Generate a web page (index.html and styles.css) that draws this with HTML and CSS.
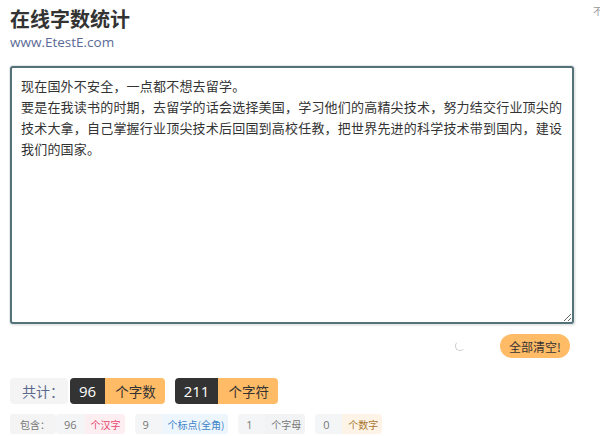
FILE: index.html
```html
<!DOCTYPE html>
<html lang="zh-CN">
  <head>
    <meta charset="UTF-8" />
    <meta name="viewport" content="width=device-width, initial-scale=1.0" />
    <title>在线字数统计</title>
    <link rel="stylesheet" href="styles.css">
  </head>
  <body>
    <div class="corner-note">不</div>
    <div class="container">
      <h1>在线字数统计</h1>
      <div class="site">www.EtestE.com</div>
      <textarea id="text" class="text-input">现在国外不安全，一点都不想去留学。
要是在我读书的时期，去留学的话会选择美国，学习他们的高精尖技术，努力结交行业顶尖的技术大拿，自己掌握行业顶尖技术后回国到高校任教，把世界先进的科学技术带到国内，建设我们的国家。</textarea>
      <div class="actions">
        <span class="spinner"></span>
        <button class="clear-btn" type="button">全部清空!</button>
      </div>
      <div class="totals">
        <span class="label-box">共计：</span>
        <span class="pair">
          <span class="num-dark">96</span><span class="unit-orange">个字数</span>
        </span>
        <span class="pair">
          <span class="num-dark">211</span><span class="unit-orange">个字符</span>
        </span>
      </div>
      <div class="details">
        <span class="tag-label">包含：</span>
        <span class="pair">
          <span class="tag-num">96</span><span class="tag-unit pink">个汉字</span>
        </span>
        <span class="pair">
          <span class="tag-num">9</span><span class="tag-unit blue">个标点(全角)</span>
        </span>
        <span class="pair">
          <span class="tag-num">1</span><span class="tag-unit grey">个字母</span>
        </span>
        <span class="pair">
          <span class="tag-num">0</span><span class="tag-unit amber">个数字</span>
        </span>
      </div>
    </div>
  </body>
</html>
```

FILE: styles.css
```css
/* 字数统计页面 */
body {
  font-family: "Noto Sans CJK SC", "Liberation Sans", sans-serif;
  background-color: #fff;
  margin: 0;
  padding: 0;
  color: #333;
  overflow: hidden;
}

.corner-note {
  position: absolute;
  top: 3px;
  left: 593px;
  font-size: 10px;
  color: #999;
}

.container {
  padding: 5px 26px 0 10px;
}

h1 {
  font-size: 20px;
  font-weight: bold;
  line-height: 28px;
  margin: 0;
  color: #333;
}

.site {
  font-family: "Open Sans", "Noto Sans CJK SC", sans-serif;
  font-size: 13.5px;
  line-height: 18px;
  color: #5b6a96;
}

.text-input {
  display: block;
  width: 100%;
  height: 258px;
  margin-top: 15px;
  padding: 7px 9px;
  border: 2px solid #55717a;
  border-radius: 3px;
  box-shadow: 0 0 0 1px #e3e8e9, 1px 1px 2px rgba(0, 0, 0, 0.25);
  font-family: "Noto Sans CJK SC", sans-serif;
  font-size: 13px;
  letter-spacing: 0.2px;
  line-height: 21px;
  color: #333;
  box-sizing: border-box;
  resize: both;
  outline: none;
}

.actions {
  display: flex;
  align-items: center;
  justify-content: flex-end;
  gap: 35px;
  height: 24px;
  margin-top: 10px;
  padding-right: 4px;
}

.spinner {
  width: 8px;
  height: 8px;
  border: 1px solid transparent;
  border-left-color: #ccc;
  border-bottom-color: #ccc;
  border-radius: 50%;
}

.clear-btn {
  background-color: #ffbb66;
  color: #333;
  border: none;
  border-radius: 12px;
  height: 24px;
  width: 70px;
  padding: 0;
  font-family: "Noto Sans CJK SC", sans-serif;
  font-size: 12px;
  cursor: pointer;
}

.totals {
  display: flex;
  align-items: center;
  gap: 2px;
  margin-top: 20px;
  height: 26px;
}

.totals .pair + .pair {
  margin-left: 8px;
}

.pair {
  display: inline-flex;
}

.label-box {
  display: inline-flex;
  align-items: center;
  height: 26px;
  padding: 0 4px 0 12px;
  background-color: #f4f4f5;
  color: #5b6a8a;
  font-size: 14px;
  border-radius: 4px;
}

.num-dark {
  display: inline-flex;
  align-items: center;
  justify-content: center;
  height: 26px;
  padding: 0 9px;
  background-color: #333;
  color: #fff;
  font-family: "Open Sans", sans-serif;
  font-size: 15px;
  border-radius: 4px 0 0 4px;
}

.unit-orange {
  display: inline-flex;
  align-items: center;
  height: 26px;
  padding: 0 9px 0 10px;
  background-color: #ffbb66;
  color: #333;
  font-size: 13.5px;
  border-radius: 0 4px 4px 0;
}

.details {
  display: flex;
  align-items: center;
  margin-top: 10px;
  height: 20px;
  font-size: 10px;
}

.details .pair {
  margin-right: 10px;
}

.tag-label {
  display: inline-flex;
  align-items: center;
  height: 20px;
  padding: 0 6px 0 10px;
  background-color: #f4f4f5;
  color: #777;
  border-radius: 3px;
}

.tag-num {
  display: inline-flex;
  align-items: center;
  box-sizing: border-box;
  min-width: 27px;
  height: 20px;
  padding: 0 8px;
  background-color: #f4f5f6;
  color: #777;
  font-family: "Open Sans", sans-serif;
  font-size: 11px;
  border-radius: 3px 0 0 3px;
}

.tag-unit {
  display: inline-flex;
  align-items: center;
  height: 20px;
  padding: 0 4px 0 6px;
  border-radius: 0 3px 3px 0;
}

.pink {
  background-color: #fdeef2;
  color: #e6456c;
}

.blue {
  background-color: #edf5fd;
  color: #3d84c6;
}

.grey {
  background-color: #f1f3f5;
  color: #777;
}

.amber {
  background-color: #fdf4e7;
  color: #a9762e;
}
```
